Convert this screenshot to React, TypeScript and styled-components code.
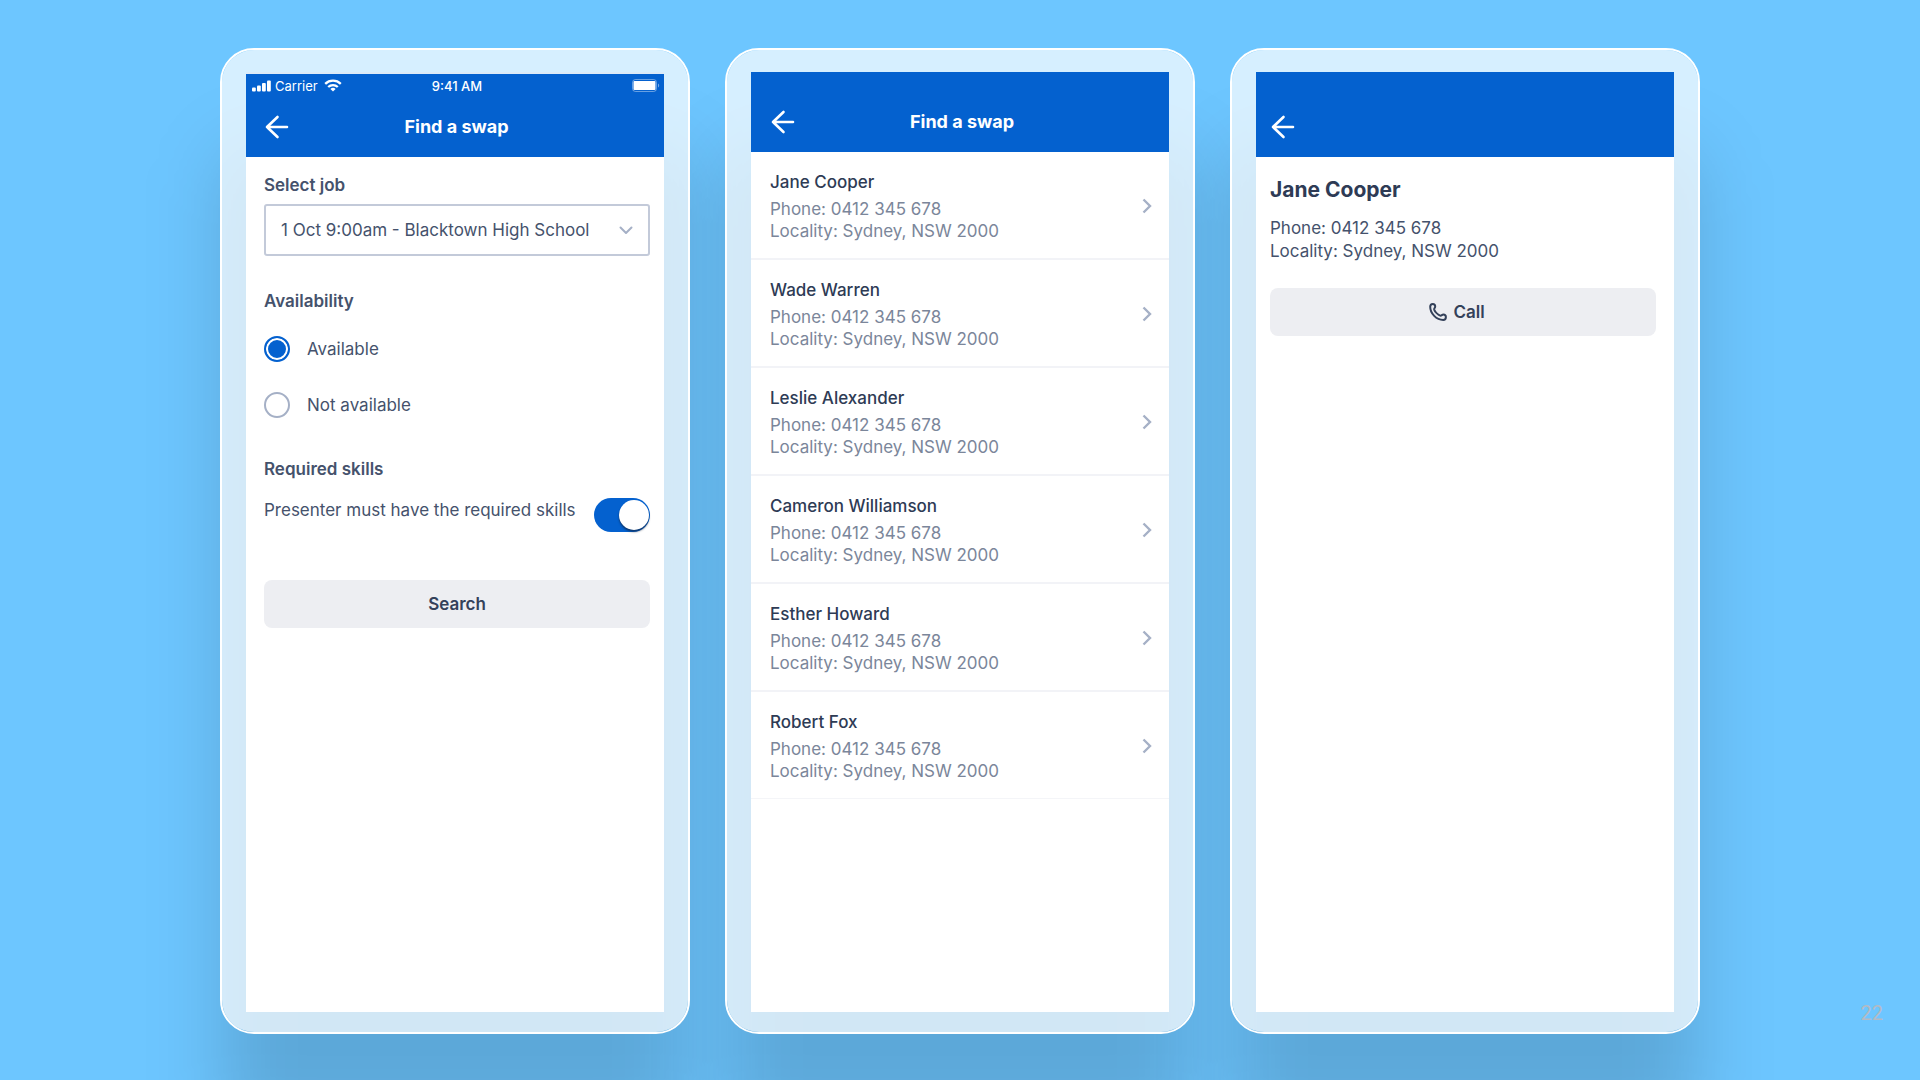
import React from "react";
import styled, { createGlobalStyle } from "styled-components";

const GlobalStyle = createGlobalStyle`
  *, *::before, *::after { box-sizing: border-box; }
  body {
    margin: 0;
    background: #6dc6ff;
    font-family: Inter, "Liberation Sans", sans-serif;
    font-size: 17px;
    line-height: 24px;
    color: #45526c;
  }
  h1, h2, p, ul, fieldset { margin: 0; padding: 0; border: 0; }
  button, select, input { font: inherit; color: inherit; margin: 0; }
`;

const Slide = styled.main`
  position: relative;
  isolation: isolate;
  overflow: clip;
  display: flex;
  justify-content: center;
  min-height: 100vh;
  padding: 48px 24px 46px;
`;

const Phones = styled.div`
  display: grid;
  grid-template-columns: repeat(3, minmax(0, 1fr));
  gap: 35px;
  width: 100%;
  max-width: 1480px;
`;

const PhoneFrame = styled.section`
  position: relative;
  display: flex;
  padding: 22px 24px 20px;
  border: 2px solid #fff;
  border-radius: 34px;
  background: rgba(255, 255, 255, 0.72);
  background-clip: padding-box;

  &::before {
    content: "";
    position: absolute;
    z-index: -1;
    inset: 100px 0 -100px;
    border-radius: 34px;
    background: rgba(0, 0, 0, 0.15);
    filter: blur(38px);
  }
`;

const Screen = styled.div`
  flex: 1;
  min-width: 0;
  background: #fff;
`;

const TopBar = styled.header<{ $height: number; $edge?: boolean }>`
  display: flex;
  flex-direction: column;
  justify-content: flex-end;
  height: ${(p) => p.$height}px;
  border-top: ${(p) => (p.$edge ? "2px solid #dceaf8" : "0")};
  background: #0461cf;
  color: #fff;
`;

const StatusBar = styled.div`
  display: grid;
  grid-template-columns: 1fr auto 1fr;
  align-items: center;
  flex: 1;
  padding: 0 4px 0 6px;
  font-size: 13px;
  line-height: 16px;
`;

const Carrier = styled.span`
  display: flex;
  align-items: center;
  gap: 4px;
  svg:last-child { margin-left: 2px; }
`;

const Clock = styled.span`
  padding-left: 2px;
  font-weight: 500;
`;

const Battery = styled.svg`
  justify-self: end;
`;

const NavBar = styled.div<{ $left: number }>`
  display: grid;
  grid-template-columns: 24px 1fr 24px;
  align-items: center;
  height: 60px;
  padding: 0 16px 0 ${(p) => p.$left}px;
`;

const BackButton = styled.button`
  display: flex;
  padding: 0;
  border: 0;
  background: none;
`;

const NavTitle = styled.h1`
  text-align: center;
  font-size: 18px;
  line-height: 24px;
  font-weight: 700;
`;

const Form = styled.form`
  display: flex;
  flex-direction: column;
  padding: 16px 14px 0 18px;
`;

const Label = styled.label`
  font-weight: 600;
`;

const Legend = styled.legend`
  padding: 0;
  font-weight: 600;
`;

const SelectBox = styled.div`
  display: grid;
  align-items: center;
  margin: 7px 0 33px;
  > * { grid-area: 1 / 1; }
  > svg { justify-self: end; margin-right: 17px; pointer-events: none; }
`;

const Select = styled.select`
  appearance: none;
  width: 100%;
  height: 52px;
  padding: 0 40px 0 15px;
  border: 2px solid #c3cad9;
  border-radius: 3px;
  background: #fff;
`;

const RadioGroup = styled.div`
  padding: 8px 0 24px;
`;

const RadioRow = styled.label`
  display: flex;
  align-items: center;
  gap: 17px;
  height: 56px;
`;

const Radio = styled.input`
  appearance: none;
  width: 26px;
  height: 26px;
  border: 2px solid #a5b0c6;
  border-radius: 50%;
  background: #fff;

  &:checked {
    border-color: #0461cf;
    background: #0461cf;
    box-shadow: inset 0 0 0 2px #fff;
  }
`;

const ToggleRow = styled.label`
  display: flex;
  justify-content: space-between;
  margin: 17px 0 48px;
`;

const Toggle = styled.input`
  appearance: none;
  flex: none;
  display: flex;
  justify-content: flex-end;
  width: 56px;
  height: 34px;
  padding: 2px 1px;
  border-radius: 17px;
  background: #0461cf;

  &::before {
    content: "";
    width: 30px;
    height: 30px;
    border-radius: 50%;
    background: #fff;
    box-shadow: 0 2px 2px rgba(20, 30, 50, 0.6);
  }
  &:not(:checked) { justify-content: flex-start; background: #a5b0c6; }
`;

const ActionButton = styled.button<{ $withIcon?: boolean }>`
  display: flex;
  align-items: center;
  justify-content: center;
  gap: 6px;
  width: 100%;
  height: 48px;
  padding: 0 ${(p) => (p.$withIcon ? 12 : 0)}px 0 0;
  border: 0;
  border-radius: 8px;
  background: #edeef2;
  color: #34415a;
  font-weight: 600;
`;

const People = styled.ul`
  list-style: none;
`;

const Person = styled.li`
  border-bottom: 2px solid #f2f3f7;
  &:last-child { border-bottom: 1px solid #f4f5f8; }
`;

const PersonLink = styled.a`
  display: flex;
  align-items: center;
  justify-content: space-between;
  height: 106px;
  padding: 2px 17px 0 19px;
  color: #7b869a;
  line-height: 22px;
  text-decoration: none;
`;

const PersonName = styled.h2`
  margin-bottom: 5px;
  font-size: 17px;
  line-height: 22px;
  font-weight: 500;
  color: #2e3b55;
`;

const Detail = styled.div`
  padding: 19px 18px 0 14px;
`;

const DetailName = styled.h1`
  margin-bottom: 13px;
  font-size: 21px;
  line-height: 28px;
  font-weight: 700;
  color: #2e3b55;
`;

const DetailLines = styled.div`
  margin-bottom: 25px;
  line-height: 23px;
`;

const SlideNumber = styled.span`
  position: absolute;
  right: 37px;
  bottom: 55px;
  font-family: Roboto, sans-serif;
  font-size: 20px;
  color: #b4bac4;
`;

const ArrowIcon = () => (
  <svg width="24" height="24" viewBox="0 0 24 24" fill="none" stroke="#fff" strokeWidth="2.6" strokeLinecap="round" strokeLinejoin="round" aria-hidden="true">
    <path d="M22 12H2M12.500 2L2 12l10.500 10" />
  </svg>
);

const SignalIcon = () => (
  <svg width="19" height="12" viewBox="0 0 19 12" fill="#fff" aria-hidden="true">
    <rect x="0" y="7.500" width="3.800" height="4" rx="1" />
    <rect x="5" y="5.500" width="3.800" height="6" rx="1" />
    <rect x="10" y="3" width="3.800" height="8.500" rx="1" />
    <rect x="15" y="0.500" width="3.800" height="11" rx="1" />
  </svg>
);

const WifiIcon = () => (
  <svg width="18" height="13" viewBox="0 0 18 13" fill="none" stroke="#fff" strokeWidth="2.300" aria-hidden="true">
    <path d="M1.200 4.800a11.200 11.200 0 0 1 15.600 0" />
    <path d="M4.200 8a7 7 0 0 1 9.600 0" />
    <path d="M9 12.600L6.400 10a3.800 3.800 0 0 1 5.200 0z" fill="#fff" stroke="none" />
  </svg>
);

const BatteryIcon = () => (
  <Battery width="28" height="13" viewBox="0 0 28 13" fill="none" aria-hidden="true">
    <rect x="0.500" y="0.500" width="24" height="12" rx="3" stroke="#fff" strokeOpacity="0.400" />
    <rect x="1.500" y="2" width="22" height="9" rx="1" fill="#fff" />
    <path d="M26 4.500c1.600.6 1.600 3.400 0 4z" fill="#fff" fillOpacity="0.450" />
  </Battery>
);

const ChevronDown = () => (
  <svg width="14" height="9" viewBox="0 0 14 9" fill="none" stroke="#a5b0c6" strokeWidth="2" strokeLinecap="round" strokeLinejoin="round" aria-hidden="true">
    <path d="M1.500 1.500L7 7l5.500-5.500" />
  </svg>
);

const ChevronRight = () => (
  <svg width="10" height="16" viewBox="0 0 10 16" fill="none" stroke="#a5b0c6" strokeWidth="2.400" aria-hidden="true">
    <path d="M1.500 1.500L8 8l-6.500 6.500" />
  </svg>
);

const HandsetIcon = () => (
  <svg width="18" height="18" viewBox="0 0 18 18" fill="none" stroke="#34415a" strokeWidth="2" strokeLinejoin="round" aria-hidden="true">
    <path d="M1.200 3.800C1.200 2 2.500 1 3.800 1c1.500 0 2.400 1.200 2.400 2.500 0 1.300-1.400 1.900-1 3.100.8 2.200 3.800 5.200 6 6 1.300.4 1.800-1 3.100-1 1.500 0 2.600 1 2.600 2.500S15.800 17 14.200 17C7.500 17 1.200 10.500 1.200 3.800z" />
  </svg>
);

const people = ["Jane Cooper", "Wade Warren", "Leslie Alexander", "Cameron Williamson", "Esther Howard", "Robert Fox"];

const Back = () => (
  <BackButton type="button" aria-label="Back">
    <ArrowIcon />
  </BackButton>
);

const Contact = () => (
  <>
    <p>Phone: 0412 345 678</p>
    <p>Locality: Sydney, NSW 2000</p>
  </>
);

export default function App() {
  return (
    <Slide>
      <GlobalStyle />
      <Phones>
        <PhoneFrame>
          <Screen>
            <TopBar $height={85} $edge>
              <StatusBar>
                <Carrier>
                  <SignalIcon />
                  Carrier
                  <WifiIcon />
                </Carrier>
                <Clock>9:41 AM</Clock>
                <BatteryIcon />
              </StatusBar>
              <NavBar $left={19}>
                <Back />
                <NavTitle>Find a swap</NavTitle>
              </NavBar>
            </TopBar>
            <Form onSubmit={(e) => e.preventDefault()}>
              <Label htmlFor="job">Select job</Label>
              <SelectBox>
                <Select id="job">
                  <option>1 Oct 9:00am - Blacktown High School</option>
                </Select>
                <ChevronDown />
              </SelectBox>
              <fieldset>
                <Legend>Availability</Legend>
                <RadioGroup>
                  <RadioRow>
                    <Radio type="radio" name="availability" defaultChecked />
                    Available
                  </RadioRow>
                  <RadioRow>
                    <Radio type="radio" name="availability" />
                    Not available
                  </RadioRow>
                </RadioGroup>
              </fieldset>
              <fieldset>
                <Legend>Required skills</Legend>
                <ToggleRow>
                  Presenter must have the required skills
                  <Toggle type="checkbox" role="switch" defaultChecked />
                </ToggleRow>
              </fieldset>
              <ActionButton type="submit">Search</ActionButton>
            </Form>
          </Screen>
        </PhoneFrame>

        <PhoneFrame>
          <Screen>
            <TopBar $height={80}>
              <NavBar $left={20}>
                <Back />
                <NavTitle>Find a swap</NavTitle>
              </NavBar>
            </TopBar>
            <People>
              {people.map((name) => (
                <Person key={name}>
                  <PersonLink href="#">
                    <div>
                      <PersonName>{name}</PersonName>
                      <Contact />
                    </div>
                    <ChevronRight />
                  </PersonLink>
                </Person>
              ))}
            </People>
          </Screen>
        </PhoneFrame>

        <PhoneFrame>
          <Screen>
            <TopBar $height={85}>
              <NavBar $left={15}>
                <Back />
              </NavBar>
            </TopBar>
            <Detail>
              <DetailName>Jane Cooper</DetailName>
              <DetailLines>
                <Contact />
              </DetailLines>
              <ActionButton type="button" $withIcon>
                <HandsetIcon />
                Call
              </ActionButton>
            </Detail>
          </Screen>
        </PhoneFrame>
      </Phones>
      <SlideNumber>22</SlideNumber>
    </Slide>
  );
}
